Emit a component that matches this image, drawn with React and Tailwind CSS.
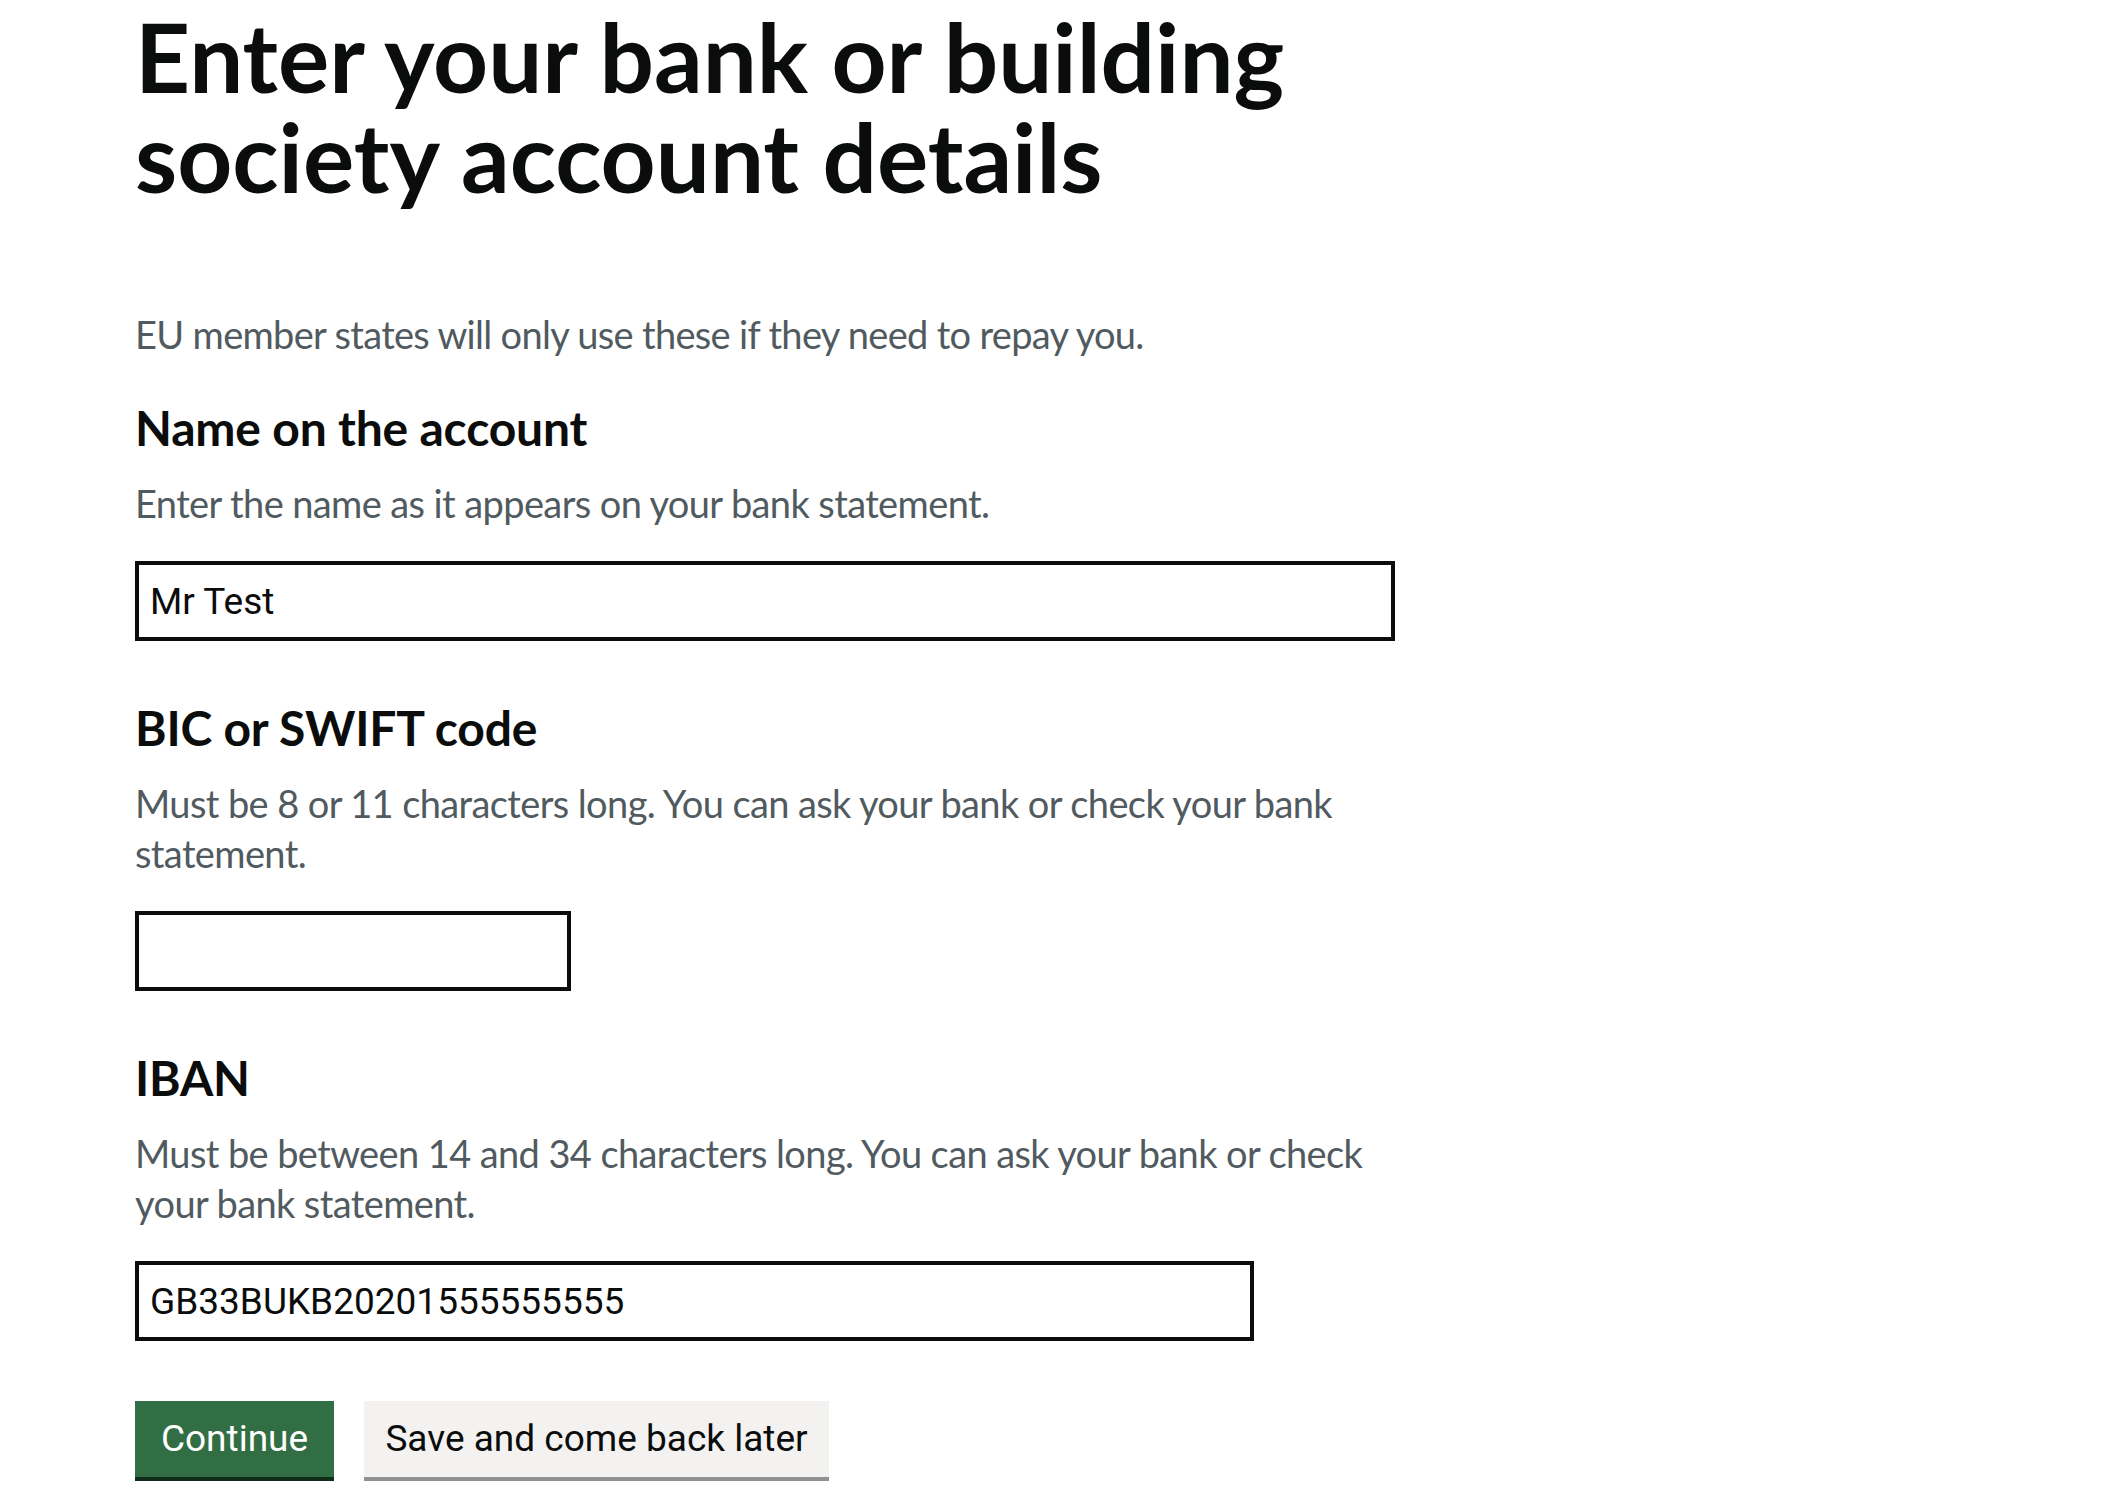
import React from "react";

function Field({ label, hint, value, widthClass, first }) {
  return (
    <div className={first ? "mt-[39px]" : "mt-[57px]"}>
      <label className="block text-[48px] leading-[60px] font-bold tracking-[-0.004em]">{label}</label>
      <div className="mt-[20px] text-[38px] leading-[50px] text-[#505a5f] tracking-[-0.016em]">{hint}</div>
      <input
        type="text"
        defaultValue={value}
        className={`mt-[33px] block h-[80px] border-[4px] border-[#0b0c0c] bg-white px-[11px] font-['Roboto',sans-serif] text-[37px] text-[#0b0c0c] outline-none ${widthClass}`}
      />
    </div>
  );
}

export default function App() {
  return (
    <div className="min-h-[1502px] bg-white text-[#0b0c0c] font-['Lato',sans-serif]">
      <div className="pl-[135px] pt-[6px] w-[1400px]">
        <h1 className="text-[96px] leading-[100px] font-bold tracking-[0em]">
          Enter your bank or building
          <br />
          society account details
        </h1>
        <p className="mt-[103px] text-[38px] leading-[50px] text-[#505a5f] tracking-[-0.018em]">
          EU member states will only use these if they need to repay you.
        </p>
        <Field
          first
          label="Name on the account"
          hint="Enter the name as it appears on your bank statement."
          value="Mr Test"
          widthClass="w-[1260px]"
        />
        <Field
          label="BIC or SWIFT code"
          hint={
            <>
              Must be 8 or 11 characters long. You can ask your bank or check your bank
              <br />
              statement.
            </>
          }
          value=""
          widthClass="w-[436px]"
        />
        <Field
          label="IBAN"
          hint={
            <>
              Must be between 14 and 34 characters long. You can ask your bank or check
              <br />
              your bank statement.
            </>
          }
          value="GB33BUKB20201555555555"
          widthClass="w-[1119px]"
        />
        <div className="mt-[60px] flex gap-[30px] font-['Roboto',sans-serif]">
          <button className="h-[76px] w-[199px] bg-[#326e44] text-[37px] text-white shadow-[0_4px_0_#0f2d19]">
            Continue
          </button>
          <button className="h-[76px] w-[465px] bg-[#f3f2f1] text-[37px] text-[#0b0c0c] shadow-[0_4px_0_#929191]">
            Save and come back later
          </button>
        </div>
      </div>
    </div>
  );
}
